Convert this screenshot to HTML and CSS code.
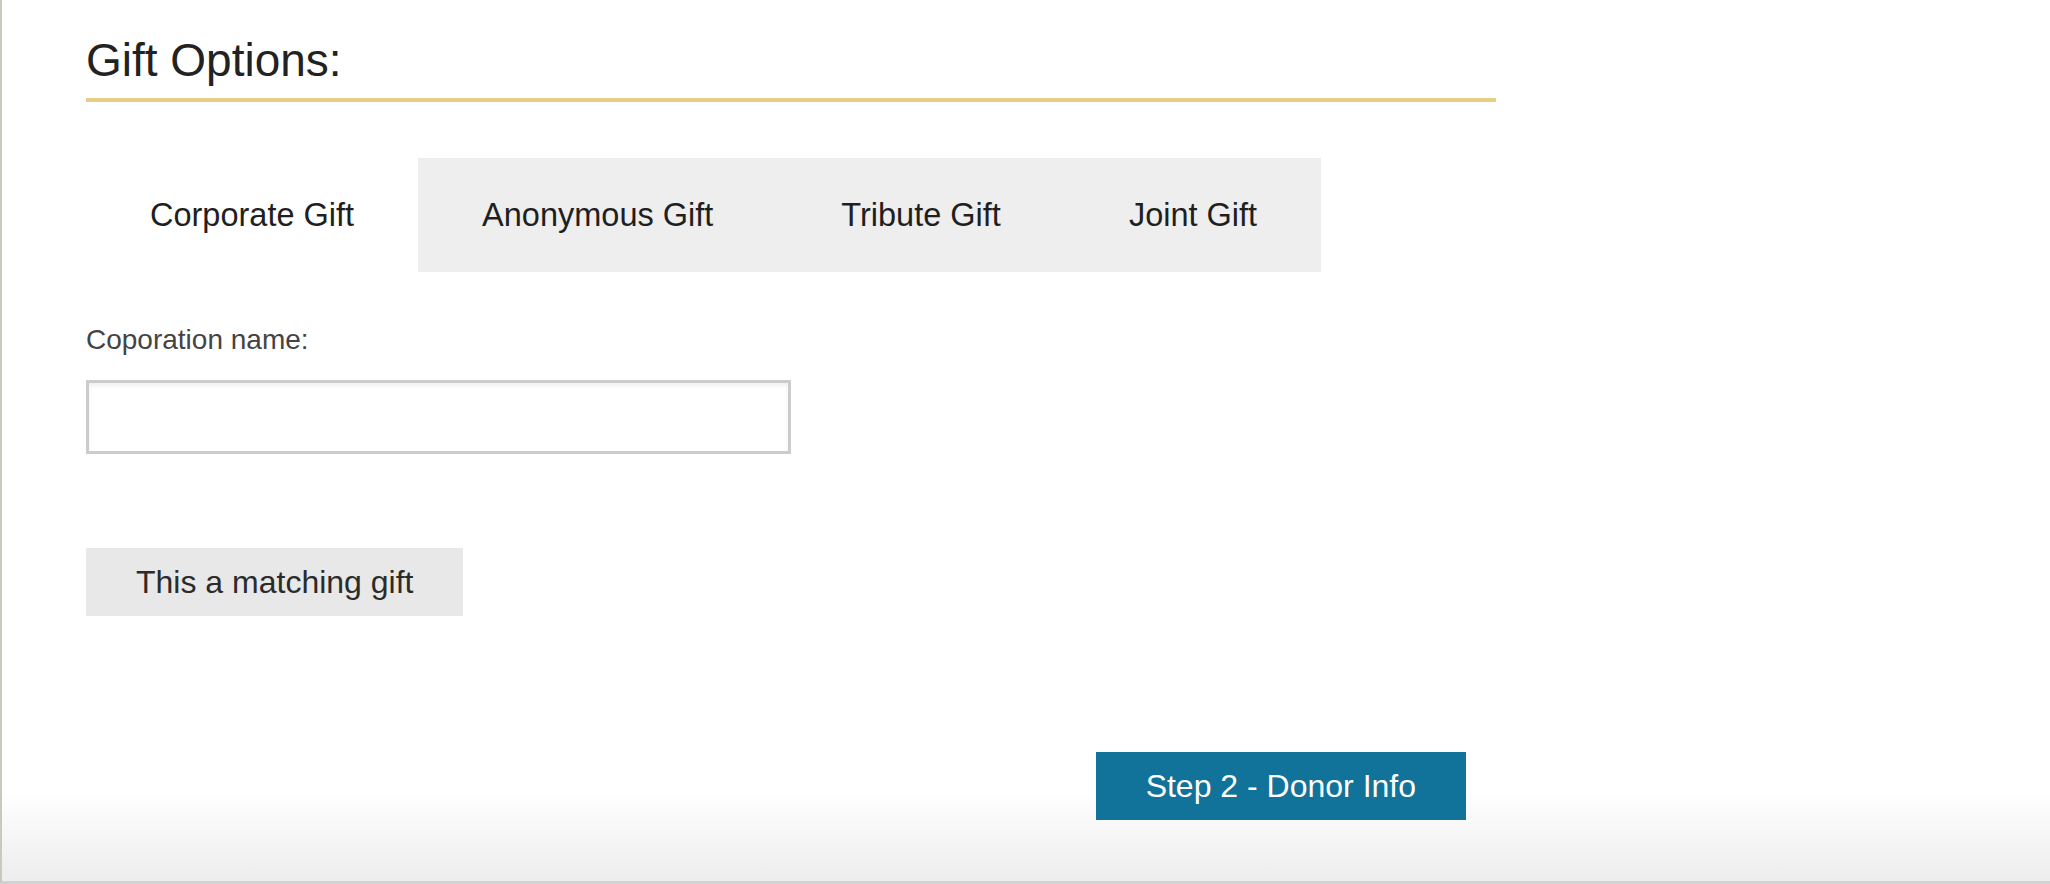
FILE: index.html
```html
<!DOCTYPE html>
<html lang="en">
<head>
<meta charset="utf-8">
<title>Gift Options</title>
<link rel="stylesheet" href="styles.css">
</head>
<body>
<div class="page">
  <div class="content">
    <h2 class="section-title">Gift Options:</h2>
    <ul class="tabs">
      <li class="tab active">Corporate Gift</li>
      <li class="tab">Anonymous Gift</li>
      <li class="tab">Tribute Gift</li>
      <li class="tab">Joint Gift</li>
    </ul>
    <div class="field">
      <label class="field-label" for="corp">Coporation name:</label>
      <input class="field-input" id="corp" type="text">
    </div>
    <button class="btn-match" type="button">This a matching gift</button>
    <div class="actions">
      <button class="btn-next" type="button">Step 2 - Donor Info</button>
    </div>
  </div>
</div>
</body>
</html>
```
FILE: styles.css
```css
* { box-sizing: border-box; }
html, body { margin: 0; padding: 0; }
body {
  font-family: "Liberation Sans", Arial, Helvetica, sans-serif;
  color: #222;
  background: #fff;
}
.page {
  height: 884px;
  border-left: 2px solid #cbc8be;
  border-bottom: 3px solid #d2d2d2;
  background: linear-gradient(to bottom, #fff 0, #fff 790px, #ededed 881px);
  overflow: hidden;
}
.content {
  padding: 37px 0 0 84px;
  width: 1494px;
}
.section-title {
  margin: 0;
  font-size: 46px;
  font-weight: normal;
  line-height: 46px;
  color: #222;
  padding-bottom: 15px;
  border-bottom: 4px solid #e8cd87;
  width: 1410px;
}
.tabs {
  list-style: none;
  margin: 56px 0 0;
  padding: 0;
  display: flex;
  width: max-content;
  background: #eeeeee;
}
.tab {
  height: 114px;
  display: flex;
  align-items: center;
  padding: 0 64px;
  font-size: 32.5px;
  line-height: 1;
  color: #1f1f1f;
}
.tab.active { background: #fff; }
.field {
  margin-top: 54px;
  display: flex;
  flex-direction: column;
  align-items: flex-start;
}
.field-label {
  font-size: 28px;
  line-height: 28px;
  color: #444;
}
.field-input {
  margin-top: 26px;
  width: 705px;
  height: 74px;
  border: 3px solid #cccccc;
  box-shadow: inset 0 3px 4px rgba(0, 0, 0, 0.06);
  background: #fff;
  font-family: inherit;
  font-size: 28px;
  padding: 0 12px;
  outline: none;
}
.btn-match {
  display: block;
  margin-top: 94px;
  height: 68px;
  padding: 0 50px;
  border: 0;
  background: #e8e8e8;
  color: #2b2b2b;
  font-family: inherit;
  font-size: 32px;
  line-height: 68px;
}
.actions {
  margin-top: 136px;
  width: 1380px;
  display: flex;
  justify-content: flex-end;
}
.btn-next {
  height: 68px;
  padding: 0 50px;
  border: 0;
  background: #11729a;
  color: #fff;
  font-family: inherit;
  font-size: 32px;
  line-height: 68px;
}
```
